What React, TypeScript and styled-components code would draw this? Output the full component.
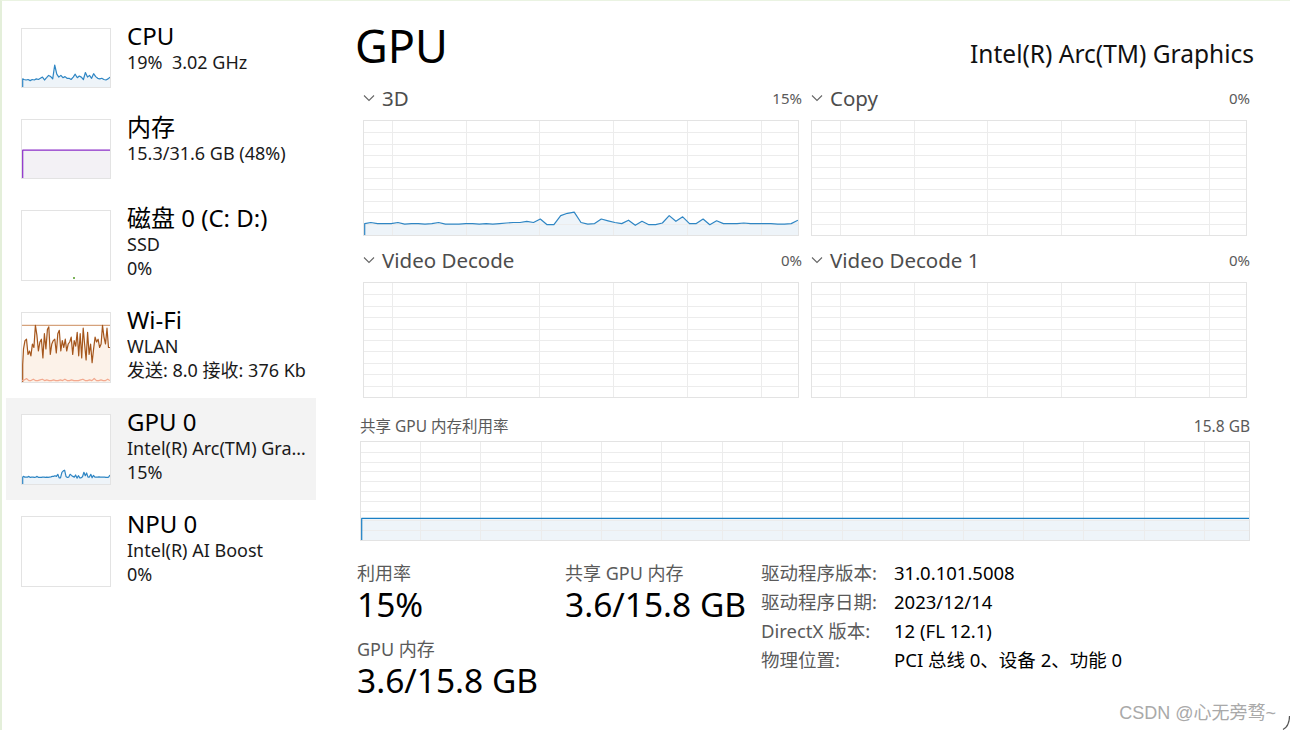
import React from "react";
import styled, { createGlobalStyle } from "styled-components";

const GlobalStyle = createGlobalStyle`
  html, body {
    margin: 0;
    padding: 0;
    background: #fff;
  }
  body {
    font-family: "Noto Sans", "Noto Sans CJK SC", sans-serif;
    color: #000;
  }
`;

const Window = styled.div`
  position: relative;
  width: 1290px;
  height: 730px;
  box-sizing: border-box;
  border-top: 1px solid #eaf3e2;
  border-left: 2px solid #e4efda;
  display: flex;
  overflow: hidden;
  background: #fff;
`;

const Sidebar = styled.div`
  width: 338px;
  flex: none;
  box-sizing: border-box;
  padding: 11px 0 0 4px;
  display: flex;
  flex-direction: column;
`;

const Item = styled.div<{ $active?: boolean }>`
  width: 310px;
  box-sizing: border-box;
  display: flex;
  gap: 16px;
  padding: 16px 0 15px 15px;
  background: ${(p) => (p.$active ? "#f3f3f3" : "transparent")};
`;

const Thumb = styled.div<{ $tall?: boolean }>`
  width: 90px;
  height: ${(p) => (p.$tall ? 71 : 60)}px;
  flex: none;
  box-sizing: border-box;
  border: 1px solid #e3e3e3;
  background: #fff;
  svg {
    display: block;
  }
`;

const ItemText = styled.div`
  flex: 1;
  min-width: 0;
  margin-top: -6px;
  padding-right: 4px;
`;

const ItemTitle = styled.div`
  font-size: 24px;
  line-height: 28px;
  white-space: nowrap;
`;

const ItemSub = styled.div`
  font-size: 18px;
  line-height: 24px;
  color: #1a1a1a;
  white-space: pre;
  overflow: hidden;
  text-overflow: ellipsis;
`;

const Main = styled.div`
  flex: 1;
  min-width: 0;
  box-sizing: border-box;
  padding: 17px 36px 0 16px;
  display: flex;
  flex-direction: column;
`;

const HeaderRow = styled.div`
  display: flex;
  justify-content: space-between;
  align-items: baseline;
`;

const Heading = styled.h1`
  margin: 0 0 0 -1px;
  font-size: 45px;
  font-weight: 400;
  line-height: 56px;
`;

const Model = styled.div`
  font-size: 24.5px;
  color: #111;
`;

const PanelGrid = styled.div`
  margin: 12px 0 0 7px;
  display: grid;
  grid-template-columns: 439px 439px;
  column-gap: 9px;
  row-gap: 12px;
`;

const Panel = styled.div`
  display: flex;
  flex-direction: column;
`;

const PanelHead = styled.div`
  display: flex;
  align-items: center;
  height: 24px;
  margin-bottom: 10px;
  color: #4d4d4d;
`;

const Chevron = styled.svg`
  width: 12px;
  height: 8px;
  margin-right: 7px;
  flex: none;
`;

const PanelTitle = styled.span`
  font-size: 20.5px;
`;

const PanelValue = styled.span`
  margin-left: auto;
  font-size: 15px;
  color: #5a5a5a;
`;

const Frame = styled.div<{ $w: number; $h: number }>`
  width: ${(p) => p.$w}px;
  height: ${(p) => p.$h}px;
  box-sizing: border-box;
  border: 1px solid #e3e3e3;
  svg {
    display: block;
  }
`;

const Shared = styled.div`
  margin: 18px 0 0 4px;
  width: 890px;
`;

const SharedHead = styled.div`
  display: flex;
  justify-content: space-between;
  font-size: 15.5px;
  line-height: 20px;
  color: #5a5a5a;
  margin-bottom: 5px;
`;

const Stats = styled.div`
  margin: 20px 0 0 1px;
  display: grid;
  grid-template-columns: 208px 196px 1fr;
`;

const StatBlock = styled.div`
  display: flex;
  flex-direction: column;
`;

const StatLabel = styled.div<{ $gap?: boolean }>`
  font-size: 18px;
  line-height: 24px;
  color: #5a5a5a;
  margin-top: ${(p) => (p.$gap ? 14 : 0)}px;
`;

const StatValue = styled.div`
  font-size: 33.5px;
  line-height: 38px;
  white-space: nowrap;
`;

const InfoTable = styled.div`
  display: grid;
  grid-template-columns: 133px auto;
  font-size: 18.5px;
  line-height: 29px;
  margin-top: -3px;
  align-content: start;
`;

const InfoKey = styled.div`
  color: #5a5a5a;
  white-space: nowrap;
`;

const InfoVal = styled.div`
  white-space: nowrap;
`;

const Watermark = styled.div`
  position: absolute;
  right: 14px;
  bottom: 6px;
  font-family: "Liberation Sans", "Noto Sans CJK SC", sans-serif;
  font-size: 18px;
  color: #a9a9a9;
`;

const Corner = styled.svg`
  position: absolute;
  right: 0;
  bottom: 0;
`;

type Series = {
  data: number[];
  line: string;
  fill?: string;
  edge?: boolean;
};

type ChartProps = {
  w: number;
  h: number;
  rows?: number;
  colStep?: number;
  colOffset?: number;
  series?: Series[];
  cap?: { at: number; color: string };
  children?: React.ReactNode;
};

function seriesPath(data: number[], w: number, h: number) {
  const n = data.length;
  return data
    .map((v, i) => {
      const x = (i / (n - 1)) * w;
      const y = h - (v / 100) * h;
      return `${i === 0 ? "M" : "L"}${x.toFixed(1)},${y.toFixed(1)}`;
    })
    .join(" ");
}

const Chart = ({ w, h, rows, colStep, colOffset = 0, series = [], cap, children }: ChartProps) => {
  const lines: React.ReactNode[] = [];
  if (rows) {
    for (let r = 1; r < rows; r++) {
      const y = Math.round((r * h) / rows) + 0.5;
      lines.push(<line key={"r" + r} x1={0} x2={w} y1={y} y2={y} stroke="#ececec" strokeWidth={1} />);
    }
  }
  if (colStep) {
    for (let x = colOffset; x < w; x += colStep) {
      const px = Math.round(x) + 0.5;
      lines.push(<line key={"c" + x} x1={px} x2={px} y1={0} y2={h} stroke="#ececec" strokeWidth={1} />);
    }
  }
  return (
    <svg width={w} height={h} viewBox={`0 0 ${w} ${h}`}>
      {series.map((s, i) => {
        const d = seriesPath(s.data, w, h);
        return s.fill ? <path key={"f" + i} d={`${d} L${w},${h} L0,${h} Z`} fill={s.fill} /> : null;
      })}
      {lines}
      {cap && (
        <line x1={0} x2={w} y1={h - (cap.at / 100) * h} y2={h - (cap.at / 100) * h} stroke={cap.color} strokeWidth={1.2} />
      )}
      {series.map((s, i) => {
        const d = seriesPath(s.data, w, h);
        const y0 = h - (s.data[0] / 100) * h;
        return (
          <path
            key={"l" + i}
            d={s.edge ? `M0.7,${h} L0.7,${y0.toFixed(1)} ${d.slice(1).replace(/^[^ ]+/, "")}` : d}
            fill="none"
            stroke={s.line}
            strokeWidth={1.2}
            strokeLinejoin="round"
          />
        );
      })}
      {children}
    </svg>
  );
};

const BLUE = "#2f86c4";
const BLUE_FILL = "#eef4f9";

const cpuData = [14, 13, 12, 13, 11, 13, 12, 14, 13, 15, 17, 12, 16, 20, 18, 14, 38, 22, 17, 20, 16, 18, 15, 15, 13, 17, 22, 16, 19, 17, 13, 25, 17, 20, 15, 23, 18, 15, 14, 15, 13, 12, 14, 17];
const gpuData = [10, 11, 10, 10, 10, 11, 9.5, 10, 10, 9.5, 10, 11, 9.5, 9.5, 9.5, 10, 10, 9.5, 10, 9.5, 10, 10.5, 11, 11, 12, 11, 14, 9, 9, 17, 19, 20, 11, 9.5, 10, 14, 12.5, 11, 10, 13, 8.5, 12, 9, 9, 10.5, 17, 12, 16, 10, 10, 14, 9, 12.5, 10, 10, 10, 10.5, 10, 10, 10, 10, 9.5, 9.5, 10, 13];
const wifiData = [25, 48, 60, 62, 40, 45, 38, 55, 50, 82, 68, 45, 58, 62, 35, 70, 48, 76, 80, 40, 55, 60, 62, 42, 70, 75, 45, 60, 50, 62, 45, 55, 58, 65, 40, 60, 52, 72, 38, 70, 35, 78, 55, 32, 72, 40, 55, 28, 48, 65, 58, 62, 50, 55, 82, 65, 55, 78, 50, 50];
const wifiSend = [2, 3, 5, 2, 2, 4, 2, 2, 3, 4, 2, 3, 2, 2, 3, 2, 2, 3, 2, 4, 2, 2, 3, 2, 2, 2, 3, 4, 2, 2, 3, 2, 5, 2, 2, 3, 2, 2, 4, 2];
const flat = (v: number) => [v, v];

type SideEntry = {
  title: string;
  lines: string[];
  active?: boolean;
  chart: (h: number) => React.ReactNode;
};

const sideEntries: SideEntry[] = [
  {
    title: "CPU",
    lines: ["19%  3.02 GHz"],
    chart: (h) => <Chart w={88} h={h} series={[{ data: cpuData, line: BLUE, fill: BLUE_FILL, edge: true }]} />,
  },
  {
    title: "内存",
    lines: ["15.3/31.6 GB (48%)"],
    chart: (h) => <Chart w={88} h={h} series={[{ data: flat(48), line: "#8a2cc8", fill: "#f3f1f5", edge: true }]} />,
  },
  {
    title: "磁盘 0 (C: D:)",
    lines: ["SSD", "0%"],
    chart: (h) => (
      <Chart w={88} h={h}>
        <rect x={51} y={h - 3} width={2} height={2} fill="#7cb45a" />
      </Chart>
    ),
  },
  {
    title: "Wi-Fi",
    lines: ["WLAN", "发送: 8.0 接收: 376 Kb"],
    chart: (h) => (
      <Chart
        w={88}
        h={h}
        cap={{ at: 82, color: "#d5a27c" }}
        series={[
          { data: wifiData, line: "#a5561c", fill: "#fcf2e9", edge: true },
          { data: wifiSend, line: "#f3a98f" },
        ]}
      />
    ),
  },
  {
    title: "GPU 0",
    lines: ["Intel(R) Arc(TM) Graphics", "15%"],
    active: true,
    chart: (h) => <Chart w={88} h={h} series={[{ data: gpuData, line: BLUE, fill: BLUE_FILL, edge: true }]} />,
  },
  {
    title: "NPU 0",
    lines: ["Intel(R) AI Boost", "0%"],
    chart: (h) => <Chart w={88} h={h} />,
  },
];

const engines = [
  { name: "3D", value: "15%", data: gpuData },
  { name: "Copy", value: "0%" },
  { name: "Video Decode", value: "0%" },
  { name: "Video Decode 1", value: "0%" },
];

const info = [
  ["驱动程序版本:", "31.0.101.5008"],
  ["驱动程序日期:", "2023/12/14"],
  ["DirectX 版本:", "12 (FL 12.1)"],
  ["物理位置:", "PCI 总线 0、设备 2、功能 0"],
];

const App = () => {
  return (
    <>
      <GlobalStyle />
      <Window>
        <Sidebar>
          {sideEntries.map((e) => {
            const tall = e.lines.length > 1;
            return (
              <Item key={e.title} $active={e.active}>
                <Thumb $tall={tall}>{e.chart(tall ? 69 : 58)}</Thumb>
                <ItemText>
                  <ItemTitle>{e.title}</ItemTitle>
                  {e.lines.map((l) => (
                    <ItemSub key={l}>{l}</ItemSub>
                  ))}
                </ItemText>
              </Item>
            );
          })}
        </Sidebar>

        <Main>
          <HeaderRow>
            <Heading>GPU</Heading>
            <Model>Intel(R) Arc(TM) Graphics</Model>
          </HeaderRow>

          <PanelGrid>
            {engines.map((g) => (
              <Panel key={g.name}>
                <PanelHead>
                  <Chevron viewBox="0 0 12 8">
                    <path d="M1 1.5 L6 6.5 L11 1.5" fill="none" stroke="#666" strokeWidth={1.1} />
                  </Chevron>
                  <PanelTitle>{g.name}</PanelTitle>
                  <PanelValue>{g.value}</PanelValue>
                </PanelHead>
                <Frame $w={436} $h={116}>
                  <Chart
                    w={434}
                    h={114}
                    rows={10}
                    colStep={73.7}
                    colOffset={28}
                    series={g.data ? [{ data: g.data, line: BLUE, fill: BLUE_FILL, edge: true }] : []}
                  />
                </Frame>
              </Panel>
            ))}
          </PanelGrid>

          <Shared>
            <SharedHead>
              <span>共享 GPU 内存利用率</span>
              <span>15.8 GB</span>
            </SharedHead>
            <Frame $w={890} $h={100}>
              <Chart
                w={888}
                h={98}
                rows={10}
                colStep={60.3}
                colOffset={59}
                series={[{ data: flat(22), line: "#1a7fc4", fill: BLUE_FILL, edge: true }]}
              />
            </Frame>
          </Shared>

          <Stats>
            <StatBlock>
              <StatLabel>利用率</StatLabel>
              <StatValue>15%</StatValue>
              <StatLabel $gap>GPU 内存</StatLabel>
              <StatValue>3.6/15.8 GB</StatValue>
            </StatBlock>
            <StatBlock>
              <StatLabel>共享 GPU 内存</StatLabel>
              <StatValue>3.6/15.8 GB</StatValue>
            </StatBlock>
            <InfoTable>
              {info.map(([k, v]) => (
                <React.Fragment key={k}>
                  <InfoKey>{k}</InfoKey>
                  <InfoVal>{v}</InfoVal>
                </React.Fragment>
              ))}
            </InfoTable>
          </Stats>
        </Main>

        <Watermark>CSDN @心无旁骛~</Watermark>
        <Corner width="8" height="14" viewBox="0 0 8 14">
          <path d="M7.5 0 Q7.5 10 1 13.5" fill="none" stroke="#555" strokeWidth={1.2} />
        </Corner>
      </Window>
    </>
  );
};

export default App;
